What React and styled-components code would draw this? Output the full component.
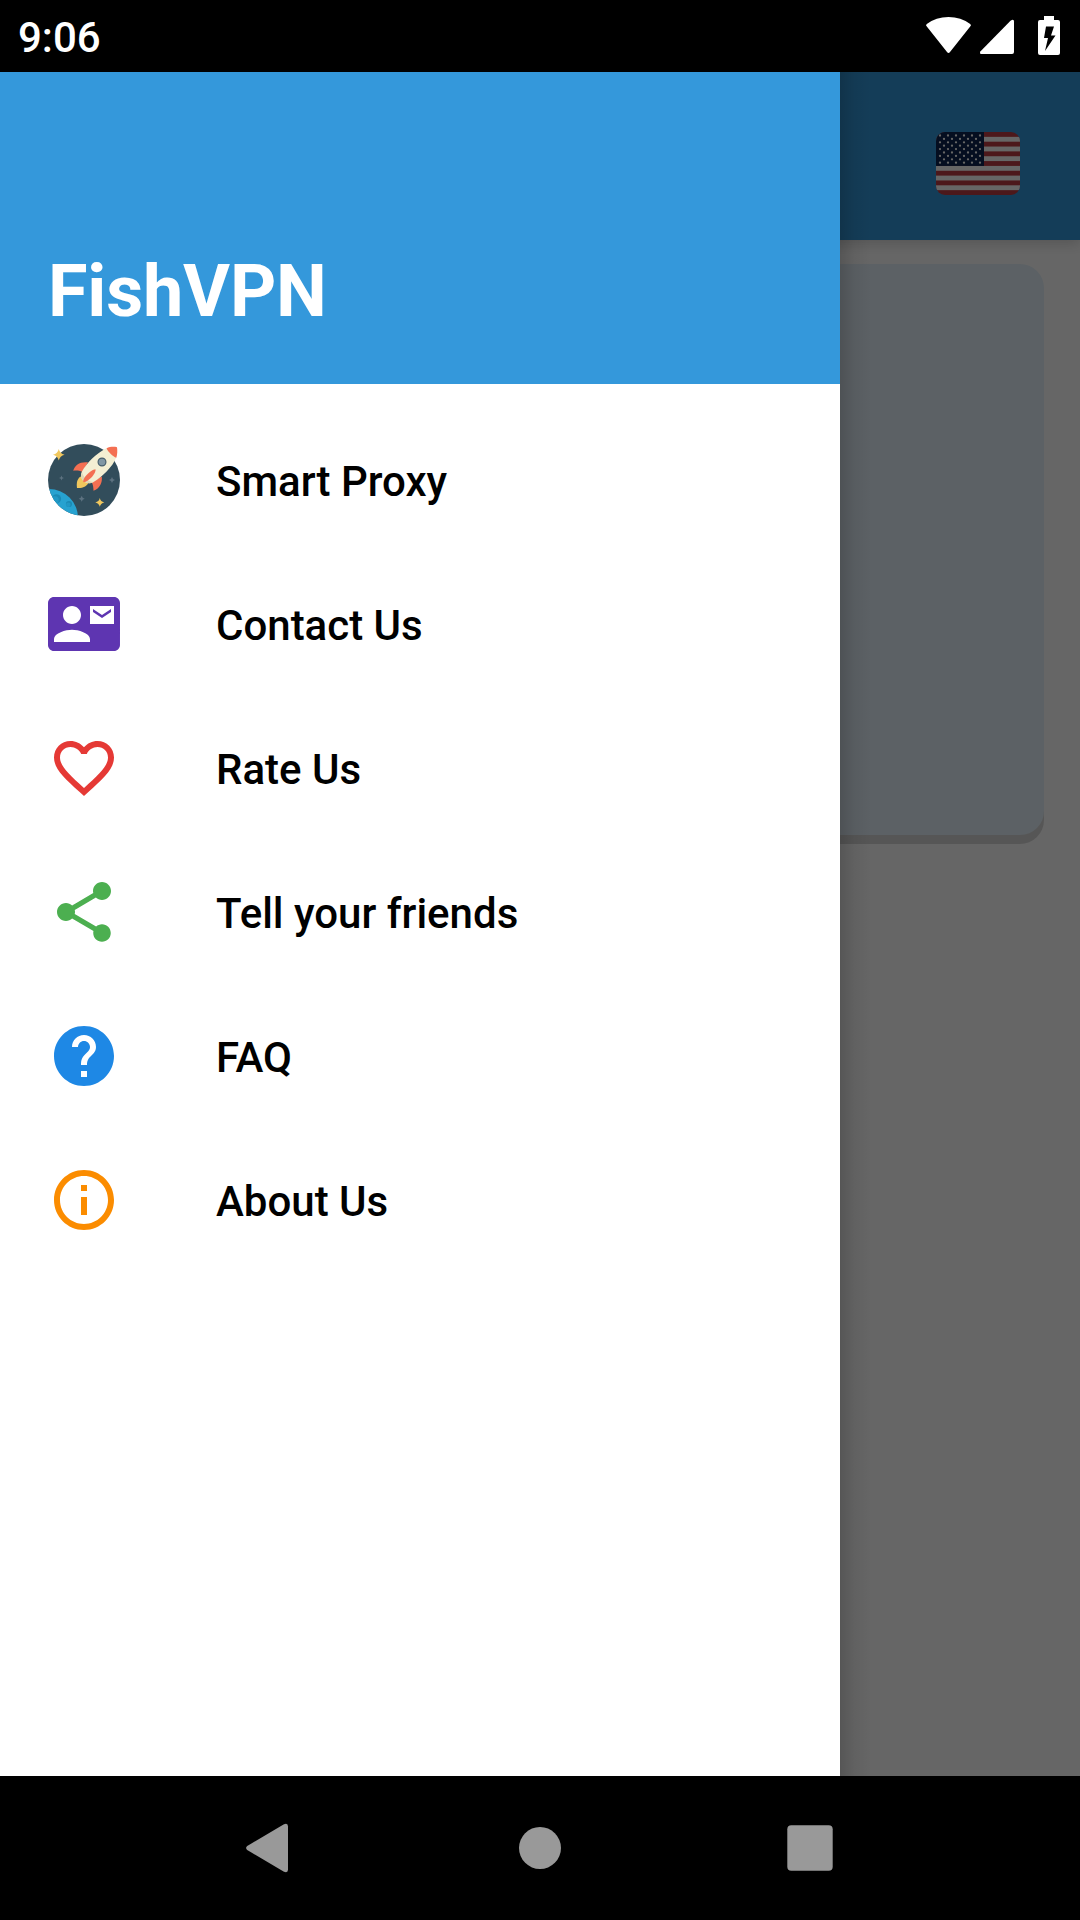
import styled, { createGlobalStyle } from 'styled-components';
import {
  MdContactMail,
  MdFavoriteBorder,
  MdShare,
  MdHelp,
  MdInfoOutline,
} from 'react-icons/md';

function App() {
  const menus = [
    { name: 'Smart Proxy', icon: <RocketIcon /> },
    { name: 'Contact Us', icon: <MdContactMail />, color: '#5e35b1' },
    { name: 'Rate Us', icon: <MdFavoriteBorder />, color: '#e53935' },
    { name: 'Tell your friends', icon: <MdShare />, color: '#4caf50' },
    { name: 'FAQ', icon: <MdHelp />, color: '#1e88e5' },
    { name: 'About Us', icon: <MdInfoOutline />, color: '#fb8c00' },
  ];

  return (
    <>
      <GlobalStyle />
      <Screen>
        <StatusBar>
          <Clock>9:06</Clock>
          <StatusIcons />
        </StatusBar>
        <Content>
          <Toolbar>
            <FlagIcon />
          </Toolbar>
          <Card />
          <Overlay>
            <Drawer>
              <DrawerHeader>FishVPN</DrawerHeader>
              <MenuList>
                {menus.map((menu) => (
                  <MenuItem key={menu.name}>
                    <MenuIcon color={menu.color}>{menu.icon}</MenuIcon>
                    <MenuName>{menu.name}</MenuName>
                  </MenuItem>
                ))}
              </MenuList>
            </Drawer>
            <DrawerShadow />
          </Overlay>
        </Content>
        <NavBar>
          <NavIcon viewBox='0 0 60 60'>
            <path d='M7.2 28 L43.5 6.500 Q48 4.500 48 8.500 V51.500 Q48 55.500 43.500 53.500 L7.200 32 Q5 30 7.200 28Z' />
          </NavIcon>
          <NavIcon viewBox='0 0 60 60'>
            <circle cx='30' cy='30' r='21' />
          </NavIcon>
          <NavIcon viewBox='0 0 60 60'>
            <rect x='7.300' y='7.300' width='45.400' height='45.400' rx='4' />
          </NavIcon>
        </NavBar>
      </Screen>
    </>
  );
}

function StatusIcons() {
  return (
    <svg width='140' height='44' viewBox='0 0 140 44' fill='white'>
      <path d='M6.800 10.600 Q5.200 9.200 6.800 8 Q16 1 28.500 1 Q41 1 50.200 8 Q51.800 9.200 50.200 10.600 L30 36 Q28.500 37.800 27 36Z' />
      <path d='M90.500 4.800 Q94 2.500 94 5.500 V36 Q94 38 92 38 H62 Q58.800 38 60.600 35.200Z' />
      <path d='M124 0 H134 V4 H138 Q140 4 140 6 V37 Q140 39 138 39 H120 Q118 39 118 37 V6 Q118 4 120 4 H124Z' />
      <path d='M126 10.500 H134 L131 19.500 H135.500 L125 35 L128 22 H124Z' fill='black' />
    </svg>
  );
}

function FlagIcon() {
  const stars = [];
  for (let row = 0; row < 9; row++)
    for (let col = 0; col < (row % 2 ? 5 : 6); col++)
      stars.push({ x: 4 + col * 8 + (row % 2 ? 4 : 0), y: 3.5 + row * 3.4 });

  return (
    <Flag viewBox='0 0 84 63'>
      <rect width='84' height='63' fill='#bd3d44' />
      {[1, 3, 5, 7, 9, 11].map((i) => (
        <rect key={i} y={i * 4.846} width='84' height='4.846' fill='white' />
      ))}
      <rect width='48' height='33.920' fill='#0d2550' />
      {stars.map((star, i) => (
        <circle key={i} cx={star.x} cy={star.y} r='1.150' fill='white' />
      ))}
    </Flag>
  );
}

function RocketIcon() {
  return (
    <svg viewBox='0 0 72 72'>
      <clipPath id='space'>
        <circle cx='36' cy='36' r='36' />
      </clipPath>
      <circle cx='36' cy='36' r='36' fill='#324d5b' />
      {/* planet */}
      <g clipPath='url(#space)'>
        <circle cx='1' cy='74' r='29' fill='#27a2d0' />
        <circle cx='8.500' cy='54.800' r='4.600' fill='#1b8ab5' />
        <circle cx='7' cy='56' r='3.800' fill='#2198c5' />
        <circle cx='21' cy='60' r='3.100' fill='#1b8ab5' />
        <circle cx='20.300' cy='60.700' r='2.300' fill='#2198c5' />
      </g>
      {/* stars */}
      <path d='M10.800 5 Q11.800 9.700 16.600 10.800 Q11.800 11.800 10.800 16.600 Q9.700 11.800 5 10.800 Q9.700 9.700 10.800 5Z' fill='#f0c75e' />
      <path d='M51.800 54 Q52.600 57.700 56.300 58.400 Q52.600 59.200 51.800 62.800 Q51 59.200 47.300 58.400 Q51 57.700 51.800 54Z' fill='#f0c75e' />
      <path d='M13.500 31.500 L14.200 33.300 L16 34 L14.200 34.700 L13.500 36.500 L12.800 34.700 L11 34 L12.800 33.300Z' fill='#5d7280' />
      <path d='M64 33 L65 35 L67 36 L65 37 L64 39 L63 37 L61 36 L63 35Z' fill='#5d7280' />
      <path d='M33.700 51.700 L34.700 53.700 L36.700 54.700 L34.700 55.700 L33.700 57.700 L32.700 55.700 L30.700 54.700 L32.700 53.700Z' fill='#5d7280' />
      {/* rocket */}
      <path d='M32.500 32.500 C29 35 28.300 39 29 44 C34 44.500 38.500 43 40.500 38.500Z' fill='#f0c75e' />
      <path d='M25.200 26.800 C27 20.500 32 17.500 40 18.300 L34.500 28 C31 26.500 28.500 26.300 25.200 26.800Z' fill='#f46f52' />
      <path d='M53.800 32.500 C54.500 38.500 52 44.500 45.500 46.800 C45.500 43.500 45 41 43.800 38.300Z' fill='#f46f52' />
      <path d='M59 4 C49 8.500 38.500 19 34 27.500 C32.500 30.500 32.500 33 34.500 36 L37 38 C40 39.800 43 39.500 45.500 38 C54 33 64.500 23 68.300 13.500Z' fill='#f4efd3' />
      <path d='M34 28 C32.500 31 32.700 33.500 34.500 36 L37 38 C40 39.800 43 39.500 45.500 38 C40.500 37.800 35 33.500 34 28Z' fill='#e0d7b5' />
      <path d='M58.600 4.200 C61.500 2.900 65.500 2.500 69 3.200 C69.500 6.500 69.400 10.500 68.300 13.700 C65 12.500 60 8 58.600 4.200Z' fill='#f46f52' />
      <path d='M47.500 25.200 C48.500 29 41 37.500 35.500 38.300 C33.500 35 42.500 25.500 47.500 25.200Z' fill='#f46f52' />
      <circle cx='54' cy='18' r='3.900' fill='#8197a4' stroke='#475f6d' strokeWidth='1.200' />
    </svg>
  );
}

const GlobalStyle = createGlobalStyle`
  body {
    margin: 0;
    font-family: Roboto, sans-serif;
  }
`;

const Screen = styled.div`
  display: flex;
  flex-direction: column;
  width: 1080px;
  height: 1920px;
  overflow: hidden;
  background-color: black;
`;

const StatusBar = styled.div`
  display: flex;
  justify-content: space-between;
  align-items: center;
  height: 72px;
  box-sizing: border-box;
  padding: 4px 20px 0 18px;
`;

const Clock = styled.span`
  padding-bottom: 2px;
  color: white;
  font-size: 42px;
  font-weight: 500;
`;

const Content = styled.div`
  position: relative;
  flex: 1;
  overflow: hidden;
  background-color: white;
`;

const Toolbar = styled.div`
  display: flex;
  justify-content: flex-end;
  align-items: flex-start;
  height: 168px;
  box-sizing: border-box;
  padding: 60px 60px 0;
  background-color: #3498db;
  box-shadow: 0 4px 12px rgba(0, 0, 0, 0.16);
`;

const Flag = styled.svg`
  width: 84px;
  height: 63px;
  border-radius: 9px;
`;

const Card = styled.div`
  height: 571px;
  margin: 24px 36px;
  border-radius: 24px;
  background-color: #e6f3fc;
  box-shadow: 0 9px 0 #d8d8d8;
`;

const Overlay = styled.div`
  position: absolute;
  inset: 0;
  display: flex;
  background-color: rgba(0, 0, 0, 0.6);
`;

const Drawer = styled.nav`
  width: 840px;
  background-color: white;
`;

const DrawerShadow = styled.div`
  width: 32px;
  background: linear-gradient(to right, rgba(0, 0, 0, 0.16), rgba(0, 0, 0, 0.05) 45%, transparent);
`;

const DrawerHeader = styled.div`
  display: flex;
  align-items: flex-end;
  height: 312px;
  box-sizing: border-box;
  padding: 0 48px 50px;
  background-color: #3498db;
  color: white;
  font-size: 72px;
  font-weight: 700;
  line-height: 84px;
  letter-spacing: -0.2px;
`;

const MenuList = styled.div`
  padding: 24px 0;
`;

const MenuItem = styled.div`
  display: flex;
  align-items: center;
  gap: 96px;
  height: 144px;
  padding-left: 48px;
`;

const MenuIcon = styled.div`
  width: 72px;
  height: 72px;
  color: ${(props) => props.color};

  svg {
    display: block;
    width: 72px;
    height: 72px;
  }
`;

const MenuName = styled.span`
  padding-top: 2px;
  color: black;
  font-size: 42px;
  font-weight: 500;
`;

const NavBar = styled.div`
  display: flex;
  justify-content: center;
  align-items: center;
  gap: 210px;
  height: 144px;
`;

const NavIcon = styled.svg`
  width: 60px;
  height: 60px;
  fill: #999999;
`;

export default App;
